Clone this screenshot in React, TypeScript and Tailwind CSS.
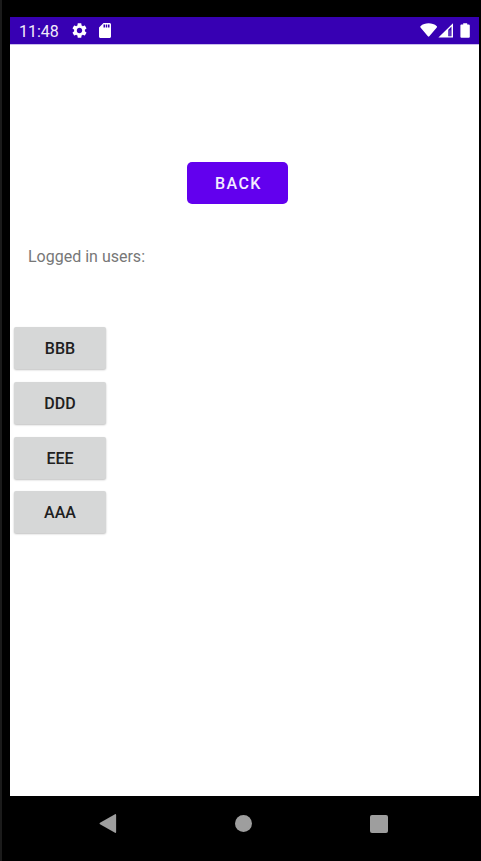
const users = ['BBB', 'DDD', 'EEE', 'AAA'];

function StatusBar() {
  return (
    <header className="flex h-[27px] items-start justify-between bg-[#3700b3] pl-[9px] pr-[8px] pt-[5px] text-white">
      <div className="flex items-start">
        <span className="w-[53px] text-[16px] leading-[20px] text-[#f1ebfa]">11:48</span>
        <svg className="mt-px h-[15px] w-[15px]" viewBox="2 2 20 20" fill="currentColor">
          <path d="M19.14 12.94c.04-.3.06-.61.06-.94 0-.32-.02-.64-.07-.94l2.03-1.58c.18-.14.23-.41.12-.61l-1.92-3.32c-.12-.22-.37-.29-.59-.22l-2.39.96c-.5-.38-1.03-.7-1.62-.94L14.4 2.81c-.04-.24-.24-.41-.48-.41h-3.84c-.24 0-.43.17-.47.41l-.36 2.54c-.59.24-1.13.57-1.62.94l-2.39-.96c-.22-.08-.47 0-.59.22L2.74 8.87c-.12.21-.08.47.12.61l2.03 1.58c-.05.3-.09.63-.09.94s.02.64.07.94l-2.03 1.58c-.18.14-.23.41-.12.61l1.92 3.32c.12.22.37.29.59.22l2.39-.96c.5.38 1.03.7 1.62.94l.36 2.54c.05.24.24.41.48.41h3.84c.24 0 .44-.17.47-.41l.36-2.54c.59-.24 1.13-.56 1.62-.94l2.39.96c.22.08.47 0 .59-.22l1.92-3.32c.12-.22.07-.47-.12-.61l-2.01-1.58zM12 15.6A3.61 3.61 0 0 1 8.4 12c0-1.98 1.62-3.6 3.6-3.6s3.6 1.62 3.6 3.6-1.62 3.6-3.6 3.6z" />
        </svg>
        <svg className="ml-[12px] mt-px h-[15px] w-[12px]" viewBox="4 2 16 20" fill="currentColor">
          <path d="M18 2h-8L4.02 8 4 20c0 1.1.9 2 2 2h12c1.1 0 2-.9 2-2V4c0-1.1-.9-2-2-2zm-6 6h-2V4h2v4zm3 0h-2V4h2v4zm3 0h-2V4h2v4z" />
        </svg>
      </div>
      <div className="flex items-start pt-px">
        <svg className="h-[14px] w-[18px]" viewBox="0 0 18 14" fill="currentColor">
          <path d="M.5 3.200C2.700 1 5.600.2 8.600.2s6 .8 8.200 3q.5.600 0 1.200L9.300 13.300q-.7.700-1.400 0L.5 4.400Q0 3.800.5 3.200z" />
        </svg>
        <svg className="h-[15px] w-[16px]" viewBox="0 0 16 15" fill="currentColor">
          <path fillRule="evenodd" d="M.4 14.600 15 .2v14.400zM10.300 6.700v6.500h3.200V3.500z" />
          <path d="M11.300 7.200h1.300v5.700h-1.300z" opacity=".3" />
        </svg>
        <svg className="ml-[6px] h-[15px] w-[11px]" viewBox="0 0 11 15" fill="currentColor">
          <path d="M3.200.2h4v1.200h1.600q1 0 1 1v11.400q0 1-1 1H1.400q-1 0-1-1V2.400q0-1 1-1h1.800z" />
        </svg>
      </div>
    </header>
  );
}

function NavigationBar() {
  return (
    <nav className="flex h-[65px] items-start bg-black pl-[88px] pt-[17px] text-[#9e9e9e]">
      <svg className="h-[21px] w-[19px]" viewBox="0 0 19 21" fill="currentColor">
        <path d="M17 1.200q1.100-.5 1.100.7v17.200q0 1.200-1.100.7L2 11.300q-1.100-.8 0-1.600z" />
      </svg>
      <span className="ml-[118px] mt-[2px] size-[17px] rounded-full bg-[#9e9e9e]" />
      <span className="ml-[118px] mt-[2px] h-[17.500px] w-[17.500px] rounded-[2px] bg-[#9e9e9e]" />
    </nav>
  );
}

export default function App() {
  return (
    <div className="h-[861px] w-[481px] overflow-hidden border-l-2 border-[#1b1b1b] bg-black pl-[8px] pr-[2px] pt-[17px] font-[Roboto,sans-serif]">
      <div className="flex h-[779px] flex-col bg-white">
        <StatusBar />
        <main className="flex flex-col items-start border-t border-[#c9bcec]">
          <button className="ml-[177px] mt-[117px] h-[42px] w-[101px] rounded-[5px] bg-[#6200ee] pl-[2px] text-[16px] font-medium leading-[44px] tracking-[1.400px] text-[#f4edff]">
            BACK
          </button>
          <p className="ml-[18px] mt-[43px] text-[16px] leading-[20px] text-[#777777]">Logged in users:</p>
          <div className="ml-[4px] mt-[60.300px] flex flex-col gap-[12.700px]">
            {users.map((user) => (
              <button
                key={user}
                className="h-[42px] w-[92px] rounded-[2px] bg-[#d6d7d7] text-[16px] font-medium leading-[44px] text-[#202020] shadow-[0_1px_2px_rgba(0,0,0,0.25)]"
              >
                {user}
              </button>
            ))}
          </div>
        </main>
      </div>
      <NavigationBar />
    </div>
  );
}
